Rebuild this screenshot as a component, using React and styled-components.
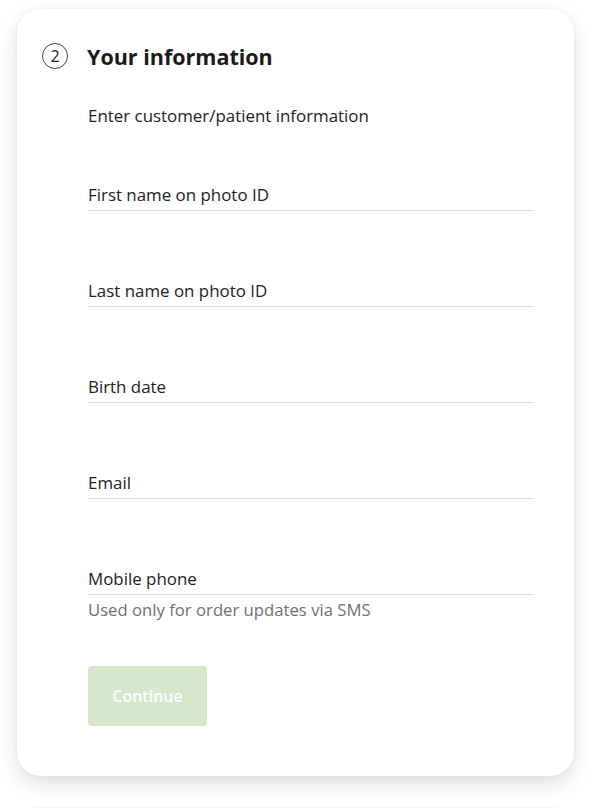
import React from "react";
import styled, { createGlobalStyle } from "styled-components";

const Global = createGlobalStyle`
  html, body { margin: 0; padding: 0; background: #fff; }
  body { font-family: "Open Sans", "Noto Sans", sans-serif; color: #222; }
  * { box-sizing: border-box; }
`;

const Page = styled.div`
  padding: 9px 20px 0 17px;
  display: flex;
  flex-direction: column;
  gap: 32px;
  height: 808px;
  overflow: hidden;
`;

const Card = styled.section`
  background: #fff;
  border-radius: 24px;
  box-shadow: 0 8px 20px rgba(0, 0, 0, 0.13), 0 0 4px rgba(0, 0, 0, 0.05);
  padding: 34px 40px 50px 25px;
  flex-shrink: 0;
`;

const Header = styled.div`
  display: flex;
  align-items: center;
  gap: 19px;
  height: 26px;
`;

const StepBadge = styled.div`
  width: 26px;
  height: 26px;
  border-radius: 50%;
  border: 1px solid #444;
  display: flex;
  align-items: center;
  justify-content: center;
  font-size: 16px;
  color: #222;
`;

const Title = styled.h2`
  margin: 0;
  font-size: 21.5px;
  font-weight: 700;
  color: #1a1a1a;
`;

const Body = styled.div`
  padding-left: 46px;
  display: flex;
  flex-direction: column;
`;

const Subtitle = styled.p`
  margin: 35px 0 0;
  font-size: 16.9px;
  line-height: 24px;
`;

const Field = styled.div`
  margin-top: ${(p) => p.$gap}px;
  padding-bottom: 3px;
  border-bottom: 1px solid #dcdcdc;
  font-size: 16.9px;
  line-height: 24px;
  color: #222;
`;

const Helper = styled.div`
  margin-top: 3px;
  font-size: 16.7px;
  line-height: 24px;
  color: #707070;
`;

const Button = styled.button`
  margin-top: 44px;
  width: 119px;
  height: 60px;
  border: none;
  border-radius: 4px;
  background: #d5e8cb;
  color: #fff;
  font-family: inherit;
  font-size: 16px;
  font-weight: 600;
`;

const NextCard = styled.div`
  height: 60px;
  background: #fff;
  border-radius: 24px;
  box-shadow: 0 0 3px rgba(0, 0, 0, 0.12);
  flex-shrink: 0;
`;

const fields = ["First name on photo ID", "Last name on photo ID", "Birth date", "Email", "Mobile phone"];

export default function App() {
  return (
    <>
      <Global />
      <Page>
        <Card>
          <Header>
            <StepBadge>2</StepBadge>
            <Title>Your information</Title>
          </Header>
          <Body>
            <Subtitle>Enter customer/patient information</Subtitle>
            {fields.map((f, i) => (
              <Field key={f} $gap={i === 0 ? 55 : 68}>{f}</Field>
            ))}
            <Helper>Used only for order updates via SMS</Helper>
            <div>
              <Button>Continue</Button>
            </div>
          </Body>
        </Card>
        <NextCard />
      </Page>
    </>
  );
}
